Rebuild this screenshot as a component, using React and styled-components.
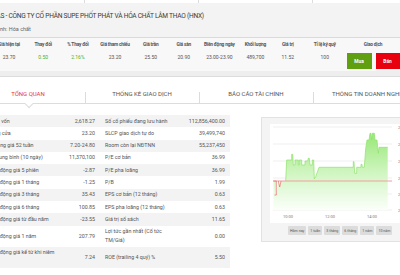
import styled, { createGlobalStyle } from 'styled-components';

const GlobalStyle = createGlobalStyle`
  html, body {
    margin: 0;
    padding: 0;
    background: #fff;
    overflow: hidden;
  }
  body {
    font-family: Roboto, "Liberation Sans", sans-serif;
    color: #444;
  }
`;

const quote = [
  { label: 'Giá hiện tại', value: '23.70' },
  { label: 'Thay đổi', value: '0.50', up: true },
  { label: '% Thay đổi', value: '2.16%', up: true },
  { label: 'Giá tham chiếu', value: '23.20' },
  { label: 'Giá trần', value: '25.50' },
  { label: 'Giá sàn', value: '20.90' },
  { label: 'Biên động ngày', value: '23.00-23.90' },
  { label: 'Khối lượng', value: '489,700' },
  { label: 'Giá trị', value: '11.52' },
  { label: 'Tỉ lệ ký quỹ', value: '100' },
];

const tabs = ['TỔNG QUAN', 'THỐNG KÊ GIAO DỊCH', 'BÁO CÁO TÀI CHÍNH', 'THÔNG TIN DOANH NGHIỆP'];

const rows = [
  ['Tổng vốn', '2,618.27', 'Số cổ phiếu đang lưu hành', '112,856,400.00'],
  ['Đóng cửa', '23.20', 'SLCP giao dịch tự do', '39,499,740'],
  ['Khoảng giá 52 tuần', '7.20-24.80', 'Room còn lại NĐTNN', '55,237,450'],
  ['KL trung bình (10 ngày)', '11,370,100', 'P/E cơ bản', '36.99'],
  ['Biến động giá 5 phiên', '-2.87', 'P/E pha loãng', '36.99'],
  ['Biến động giá 1 tháng', '-1.25', 'P/B', '1.99'],
  ['Biến động giá 3 tháng', '35.43', 'EPS cơ bản (12 tháng)', '0.63'],
  ['Biến động giá 6 tháng', '100.85', 'EPS pha loãng (12 tháng)', '0.63'],
  ['Biến động giá từ đầu năm', '-23.55', 'Giá trị sổ sách', '11.65'],
  ['Biến động giá 1 năm', '207.79', 'Lợi tức gần nhất (Cổ tức TM/Giá)', '0.00'],
  ['Biến động giá kể từ khi niêm yết', '7.24', 'ROE (trailing 4 quý) %', '5.50'],
];

const ranges = ['Hôm nay', '1 tuần', '3 tháng', '6 tháng', '1 năm', '10 năm'];

const grid = [
  { y: 3, v: '24.00' },
  { y: 20, v: '23.75' },
  { y: 37, v: '23.50' },
  { y: 54, v: '23.25' },
  { y: 70, v: '23.00' },
  { y: 86, v: '22.75' },
];

const hours = [
  ['10:00', 18],
  ['12:00', 60],
  ['14:00', 102],
];

// intraday price, in plot pixels
const greenLine =
  '15.7,57 16.7,36 21.7,36 21.7,30.3 22.7,30.3 23.3,41 25,41 25,36 28.3,36 28.3,41 29.3,41 29.3,36 31.7,36 31.7,41 35,41 35,37 37.7,37 38.3,34.3 39.3,34.3 40,41 42.3,41 42.3,36 43.7,36 44.3,55 45.7,52.7 49,43.3 83.3,43.3 83.3,37.7 84,37.7 84.7,49.3 86.7,49.3 86.7,43.3 91,43.3 91,40.3 92,40.3 92.3,43.3 94.3,43.3 95.7,24.3 97,16 99,16 100,9.3 101,9.3 101.7,16 102.3,9.3 104.3,9.3 105,16 107,16 107.7,23.3 108.3,29.3 109,23.3 117.7,23.3';

const areaPath = `M3.5,57 L6.3,57 L6.3,71 L8.3,57 L9.7,63 L11,57 L${greenLine.replace(/ /g, ' L')} L117.7,86 L3.5,86 Z`;

function PriceChart() {
  return (
    <svg width="152" height="99" viewBox="0 0 152 99">
      <defs>
        <linearGradient id="area" x1="0" y1="0" x2="0" y2="1">
          <stop offset="0" stopColor="#98e876" />
          <stop offset="0.55" stopColor="#d4f6c6" />
          <stop offset="1" stopColor="#fbfffa" />
        </linearGradient>
      </defs>
      {grid.map((g) => (
        <g key={g.v}>
          <line x1="3" x2="122" y1={g.y} y2={g.y} stroke="#e4e4e4" strokeWidth="0.6" />
          <text x="128" y={g.y + 1.5} fontSize="4" fill="#777">
            {g.v}
          </text>
        </g>
      ))}
      <path d={areaPath} fill="url(#area)" />
      <line x1="3" x2="122" y1="57" y2="57" stroke="#f2a0a0" strokeWidth="1.1" />
      <polyline points="3.5,57 6.3,57 6.3,71 4.5,71" fill="none" stroke="#e86a6a" strokeWidth="0.7" />
      <polyline points="8.3,57 9.7,63 11,57" fill="none" stroke="#e86a6a" strokeWidth="0.7" />
      <polyline points={greenLine} fill="none" stroke="#8ee26c" strokeWidth="0.7" />
      {hours.map(([t, x]) => (
        <text key={t} x={x} y="93.5" fontSize="4" fill="#777" textAnchor="middle">
          {t}
        </text>
      ))}
    </svg>
  );
}

export default function App() {
  return (
    <>
      <GlobalStyle />
      <Page>
        <TopStrip>
          {tabs.map((t) => (
            <StripCell key={t} />
          ))}
        </TopStrip>

        <Header>
          <Title>LAS - CÔNG TY CỔ PHẦN SUPE PHỐT PHÁT VÀ HÓA CHẤT LÂM THAO (HNX)</Title>
          <Sector>Ngành: Hóa chất</Sector>
        </Header>

        <QuoteBar>
          {quote.map((q) => (
            <QuoteCol key={q.label}>
              <QuoteLabel>{q.label}</QuoteLabel>
              <QuoteValue $up={q.up}>{q.value}</QuoteValue>
            </QuoteCol>
          ))}
          <QuoteCol>
            <QuoteLabel>Giao dịch</QuoteLabel>
            <Actions>
              <TradeButton $kind="buy">Mua</TradeButton>
              <TradeButton $kind="sell">Bán</TradeButton>
            </Actions>
          </QuoteCol>
        </QuoteBar>
        <Shade />

        <Tabs>
          {tabs.map((t, i) => (
            <Tab key={t} $active={i === 0} $first={i === 0}>
              {t}
            </Tab>
          ))}
        </Tabs>

        <Content>
          <StatsTable>
            <colgroup>
              <Col $w={80} />
              <Col $w={37} />
              <Col $w={78} />
              <Col $w={52} />
            </colgroup>
            <tbody>
              {rows.map((r) => (
                <StatRow key={r[0]}>
                  <Label>{r[0]}</Label>
                  <Num>{r[1]}</Num>
                  <Label>{r[2]}</Label>
                  <Num>{r[3]}</Num>
                </StatRow>
              ))}
            </tbody>
          </StatsTable>

          <ChartBox>
            <Plot>
              <PriceChart />
            </Plot>
            <Ranges>
              {ranges.map((r) => (
                <RangeButton key={r}>{r}</RangeButton>
              ))}
            </Ranges>
          </ChartBox>
        </Content>
      </Page>
    </>
  );
}

const Page = styled.div`
  margin-left: -29px;
  width: 470px;
`;

const TopStrip = styled.div`
  display: grid;
  grid-template-columns: repeat(4, 114px);
  height: 3px;
  background: #fff;
`;

const StripCell = styled.div`
  border-right: 1px solid #dcdcdc;
`;

const Header = styled.div`
  height: 35px;
  box-sizing: border-box;
  padding: 8px 0 0 19px;
  background: #f3f3f3;
  border-bottom: 1px solid #dadada;
`;

const Title = styled.div`
  margin-left: 3px;
  font-size: 6.6px;
  letter-spacing: -0.25px;
  line-height: 10px;
  color: #3a3a3a;
  white-space: nowrap;
`;

const Sector = styled.div`
  margin-top: 4px;
  font-size: 5.5px;
  line-height: 8px;
  color: #666;
`;

const QuoteBar = styled.div`
  display: grid;
  grid-template-columns: 34.5px 33.75px 35.75px 38.5px 33px 33px 38.25px 33.75px 31px 43px 53.5px;
  height: 33px;
  box-sizing: border-box;
  padding: 3px 0 0 20.75px;
  background: #f8f8f8;
`;

const QuoteCol = styled.div`
  display: flex;
  flex-direction: column;
  align-items: center;
  gap: 4px;
`;

const QuoteLabel = styled.div`
  font-size: 4.8px;
  letter-spacing: -0.2px;
  line-height: 8px;
  font-weight: bold;
  color: #555;
  white-space: nowrap;
`;

const QuoteValue = styled.div`
  font-size: 5px;
  line-height: 8px;
  color: ${(p) => (p.$up ? '#4fae2a' : '#555')};
  white-space: nowrap;
`;

const Actions = styled.div`
  display: flex;
  gap: 4px;
`;

const TradeButton = styled.button`
  width: ${(p) => (p.$kind === 'buy' ? '25px' : '24px')};
  height: 16px;
  padding: 0;
  border: 0;
  font-family: inherit;
  font-size: 4.8px;
  font-weight: bold;
  color: #fff;
  background: ${(p) => (p.$kind === 'buy' ? '#5f9f10' : '#e8000f')};
`;

const Shade = styled.div`
  height: 5px;
  background: #eeeeee;
  border-bottom: 1px solid #dcdcdc;
`;

const Tabs = styled.div`
  display: grid;
  grid-template-columns: repeat(4, 114px);
  height: 27px;
  box-sizing: border-box;
  border-bottom: 1px solid #dcdcdc;
`;

const Tab = styled.div`
  position: relative;
  padding-top: 13px;
  text-align: center;
  font-size: 6px;
  line-height: 8px;
  white-space: nowrap;
  color: ${(p) => (p.$active ? '#e8373c' : '#555')};
  &::before {
    content: '';
    position: absolute;
    left: 0;
    top: 15px;
    bottom: 0;
    border-left: ${(p) => (p.$first ? '0' : '1px solid #dcdcdc')};
  }
  &::after {
    content: '';
    display: ${(p) => (p.$active ? 'block' : 'none')};
    position: absolute;
    left: 50%;
    bottom: -3.5px;
    width: 5px;
    height: 5px;
    margin-left: -2.5px;
    background: #fff;
    border-right: 1px solid #dcdcdc;
    border-bottom: 1px solid #dcdcdc;
    transform: rotate(45deg);
  }
`;

const Content = styled.div`
  display: flex;
  align-items: flex-start;
  gap: 31px;
  padding: 11px 0 0 12px;
`;

const StatsTable = styled.table`
  width: 247px;
  table-layout: fixed;
  border-collapse: collapse;
`;

const Col = styled.col`
  width: ${(p) => p.$w}px;
`;

const StatRow = styled.tr`
  &:nth-child(odd) {
    background: #f3f3f3;
  }
`;

const Label = styled.td`
  padding: 1.65px 5px;
  font-size: 5.3px;
  line-height: 9px;
  color: #555;
`;

const Num = styled.td`
  padding: 1.65px 5px;
  text-align: right;
  font-size: 5.3px;
  line-height: 9px;
  color: #555;
  white-space: nowrap;
`;

const ChartBox = styled.div`
  width: 160px;
  height: 125px;
  margin-top: 2px;
  box-sizing: border-box;
  padding: 6px 0 0 8px;
  background: #f4f4f4;
  border: 1px solid #e2e2e2;
`;

const Plot = styled.div`
  height: 99px;
  background: #fff;
  svg {
    display: block;
  }
`;

const Ranges = styled.div`
  display: flex;
  gap: 2px;
  margin-top: 3px;
  padding-left: 18px;
`;

const RangeButton = styled.button`
  height: 9px;
  padding: 0 2px;
  border: 0;
  border-radius: 1px;
  font-family: inherit;
  font-size: 3.6px;
  color: #555;
  background: #dcdcdc;
`;
